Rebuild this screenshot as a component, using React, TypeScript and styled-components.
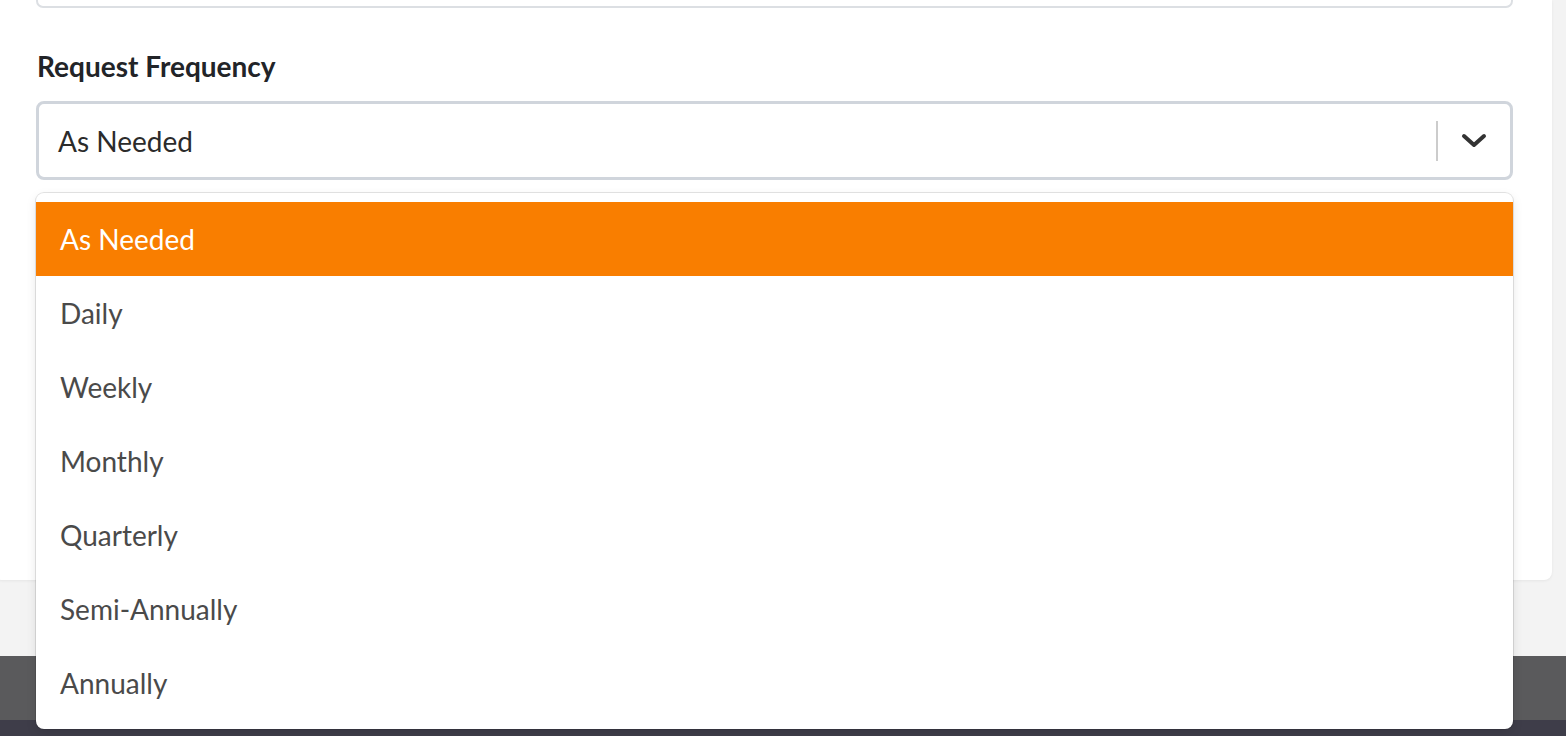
import React from "react";
import styled, { createGlobalStyle } from "styled-components";

const Global = createGlobalStyle`
  html, body { margin: 0; padding: 0; background: #f3f3f3; overflow: hidden; }
  body { font-family: Lato, "Open Sans", sans-serif; }
  * { box-sizing: border-box; }
`;

const Page = styled.div`
  position: relative;
  width: 1566px;
  height: 736px;
  display: flex;
  flex-direction: column;
  overflow: hidden;
`;

const Card = styled.div`
  background: #fff;
  margin: 0 14px 0 -6px;
  padding: 0 0 0 42px;
  height: 580px;
  border-radius: 0 0 8px 8px;
  box-shadow: 0 1px 3px rgba(0, 0, 0, 0.06);
  display: flex;
  flex-direction: column;
`;

const PrevInput = styled.div`
  width: 1477px;
  height: 48px;
  margin-top: -40px;
  border: 2px solid #dcdfe3;
  border-radius: 7px;
  background: #fff;
`;

const Label = styled.div`
  margin-top: 42px;
  font-size: 28px;
  line-height: 32px;
  font-weight: 700;
  color: #222428;
  padding-left: 1px;
`;

const Field = styled.div`
  position: relative;
  margin-top: 19px;
  width: 1477px;
`;

const Control = styled.div`
  height: 79px;
  border: 3px solid #d0d5dc;
  border-radius: 8px;
  display: flex;
  align-items: center;
  padding-left: 19px;
  background: #fff;
`;

const Value = styled.div`
  flex: 1;
  font-size: 28px;
  color: #2b2b2b;
`;

const Separator = styled.div`
  width: 2px;
  height: 40px;
  background: #cccccc;
`;

const Indicator = styled.div`
  width: 72px;
  display: flex;
  align-items: center;
  justify-content: center;
  color: #333;
`;

const Menu = styled.div`
  position: absolute;
  top: 92px;
  left: 0;
  width: 1477px;
  padding: 9px 0;
  background: #fff;
  border-radius: 8px;
  box-shadow: 0 0 0 1px rgba(0, 0, 0, 0.1), 0 4px 11px rgba(0, 0, 0, 0.1);
  z-index: 10;
`;

const Option = styled.div<{ $selected?: boolean }>`
  height: 74px;
  display: flex;
  align-items: center;
  padding-left: 24px;
  font-size: 28px;
  color: ${(p) => (p.$selected ? "#ffffff" : "#4a4a4a")};
  background: ${(p) => (p.$selected ? "#f97e00" : "transparent")};
`;

const Gap = styled.div`
  height: 76px;
`;

const Footer = styled.div`
  height: 64px;
  background: #5a5a5c;
`;

const FooterBottom = styled.div`
  flex: 1;
  background: #3e3d49;
`;

const options = [
  "As Needed",
  "Daily",
  "Weekly",
  "Monthly",
  "Quarterly",
  "Semi-Annually",
  "Annually",
];

export default function App() {
  return (
    <>
      <Global />
      <Page>
        <Card>
          <PrevInput />
          <Label>Request Frequency</Label>
          <Field>
            <Control>
              <Value>As Needed</Value>
              <Separator />
              <Indicator>
                <svg width="26" height="16" viewBox="0 0 26 16">
                  <path
                    d="M3 3 L13 12 L23 3"
                    fill="none"
                    stroke="#333"
                    strokeWidth="4"
                    strokeLinecap="round"
                    strokeLinejoin="round"
                  />
                </svg>
              </Indicator>
            </Control>
            <Menu>
              {options.map((o, i) => (
                <Option key={o} $selected={i === 0}>
                  {o}
                </Option>
              ))}
            </Menu>
          </Field>
        </Card>
        <Gap />
        <Footer />
        <FooterBottom />
      </Page>
    </>
  );
}
